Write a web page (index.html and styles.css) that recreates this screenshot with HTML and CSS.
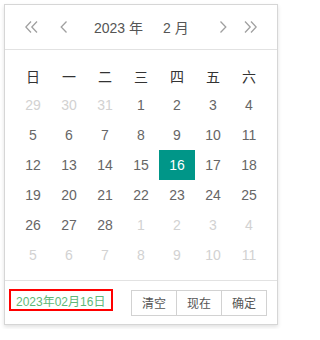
FILE: index.html
```html
<!DOCTYPE html>
<html lang="zh">
<head>
<meta charset="utf-8">
<link rel="stylesheet" href="styles.css">
</head>
<body>
<div class="picker">
  <div class="header">
    <svg class="ico dbl" width="13" height="12" viewBox="0 0 13 12"><polyline points="6,0.5 0.8,6 6,11.5"/><polyline points="12,0.5 6.8,6 12,11.5"/></svg>
    <svg class="ico sgl prev" width="8" height="12" viewBox="0 0 8 12"><polyline points="6.5,0.5 1.2,6 6.5,11.5"/></svg>
    <span class="ym year">2023 年</span>
    <span class="ym month">2 月</span>
    <svg class="ico sgl next" width="8" height="12" viewBox="0 0 8 12"><polyline points="1.5,0.5 6.8,6 1.5,11.5"/></svg>
    <svg class="ico dbl dnext" width="13" height="12" viewBox="0 0 13 12"><polyline points="1,0.5 6.2,6 1,11.5"/><polyline points="7,0.5 12.2,6 7,11.5"/></svg>
  </div>
  <div class="body">
    <div class="grid">
      <div class="wd">日</div><div class="wd">一</div><div class="wd">二</div><div class="wd">三</div><div class="wd">四</div><div class="wd">五</div><div class="wd">六</div>
      <div class="d off">29</div><div class="d off">30</div><div class="d off">31</div><div class="d">1</div><div class="d">2</div><div class="d">3</div><div class="d">4</div>
      <div class="d">5</div><div class="d">6</div><div class="d">7</div><div class="d">8</div><div class="d">9</div><div class="d">10</div><div class="d">11</div>
      <div class="d">12</div><div class="d">13</div><div class="d">14</div><div class="d">15</div><div class="d sel">16</div><div class="d">17</div><div class="d">18</div>
      <div class="d">19</div><div class="d">20</div><div class="d">21</div><div class="d">22</div><div class="d">23</div><div class="d">24</div><div class="d">25</div>
      <div class="d">26</div><div class="d">27</div><div class="d">28</div><div class="d off">1</div><div class="d off">2</div><div class="d off">3</div><div class="d off">4</div>
      <div class="d off">5</div><div class="d off">6</div><div class="d off">7</div><div class="d off">8</div><div class="d off">9</div><div class="d off">10</div><div class="d off">11</div>
    </div>
  </div>
  <div class="footer">
    <div class="value">2023年02月16日</div>
    <div class="btns">
      <span class="btn">清空</span><span class="btn">现在</span><span class="btn">确定</span>
    </div>
  </div>
</div>
</body>
</html>
```
FILE: styles.css
```css
html, body { margin: 0; padding: 0; background: #fff; }
body { font-family: "Liberation Sans", "Noto Sans CJK SC", sans-serif; }
.picker {
  margin: 4px;
  width: 272px;
  border: 1px solid #d6d6d6;
  box-shadow: 0 2px 4px rgba(0,0,0,0.12);
  background: #fff;
}
.header {
  height: 45px;
  border-bottom: 1px solid #e2e2e2;
  display: flex;
  align-items: center;
  padding: 0 20px 0 20px;
  box-sizing: border-box;
}
.ico { fill: none; stroke: #a0a0a0; stroke-width: 1.3; flex: none; }
.prev { margin-left: 22px; }
.ym { font-size: 14px; color: #555; }
.year { margin-left: 26px; }
.month { margin-left: 20px; }
.next { margin-left: auto; }
.dnext { margin-left: 17px; }
.body { padding: 12px 9px 10px 10px; }
.grid {
  display: grid;
  grid-template-columns: repeat(7, 36px);
  grid-auto-rows: 30px;
  grid-template-rows: 28px;
}
.wd, .d {
  display: flex; align-items: center; justify-content: center;
  font-size: 14px;
}
.wd { color: #333; }
.d { color: #666; }
.d.off { color: #d2d2d2; }
.d.sel { background: #009688; color: #fff; }
.footer {
  border-top: 1px solid #e2e2e2;
  height: 43px;
  display: flex;
  align-items: center;
  padding: 0 10px 0 4px;
}
.value {
  box-sizing: border-box;
  width: 104px; height: 22px;
  border: 2px solid #ff0000;
  color: #5fb878;
  font-size: 12px;
  display: flex; align-items: center;
  padding-left: 5px;
  align-self: flex-start;
  margin-top: 8px;
}
.btns { margin-left: auto; display: flex; }
.btn {
  box-sizing: border-box;
  width: 46px; height: 26px;
  border: 1px solid #d2d2d2;
  font-size: 12px; color: #555;
  display: flex; align-items: center; justify-content: center;
  margin-left: -1px;
}
```
